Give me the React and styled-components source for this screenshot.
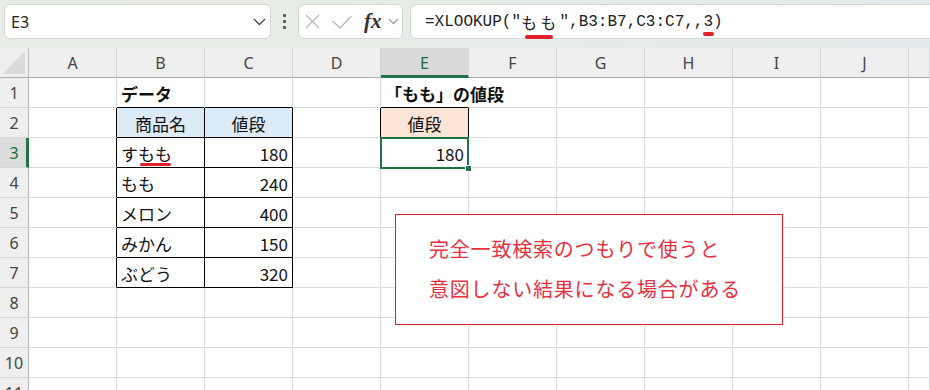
import { Fragment } from "react";
import styled, { createGlobalStyle } from "styled-components";

const GREEN = "#217346";
const GRID = "#dcdcdc";

const GlobalStyle = createGlobalStyle`
  html, body { margin: 0; padding: 0; background: #fff; }
  body { font-family: "Noto Sans CJK JP", "Noto Sans", sans-serif; overflow: hidden; }
`;

const Page = styled.div`
  position: relative;
  width: 930px;
  height: 390px;
  overflow: hidden;
  background: #fff;
`;

/* ---------- formula bar ---------- */
const TopBar = styled.div`
  display: flex;
  align-items: flex-start;
  height: 48px;
  box-sizing: border-box;
  padding: 4px 0 0 4px;
  background: linear-gradient(90deg, #e7ede4 0%, #e6ece7 55%, #e2eaec 100%);
`;

const Box = styled.div`
  display: flex;
  align-items: center;
  box-sizing: border-box;
  height: 35px;
  background: #fff;
  border: 1px solid #d3d8d1;
  border-radius: 6px;
`;

const NameBox = styled(Box)`
  width: 267px;
  justify-content: space-between;
  padding: 0 4px 0 6px;
  font-family: "Noto Sans", sans-serif;
  font-size: 16px;
  color: #222;
`;

const Kebab = styled.div`
  width: 27px;
  height: 35px;
  display: flex;
  flex-direction: column;
  align-items: center;
  justify-content: center;
  gap: 3px;
`;

const Dot = styled.span`
  width: 3px;
  height: 3px;
  border-radius: 1px;
  background: #555;
`;

const FuncBox = styled(Box)`
  width: 105px;
  padding-left: 6px;
  gap: 12px;
`;

const Fx = styled.span`
  font-family: "Liberation Serif", serif;
  font-style: italic;
  font-weight: 700;
  font-size: 21px;
  color: #333;
  margin-right: -6px;
`;

const FormulaBox = styled(Box)`
  flex: 1;
  margin: 0 -12px 0 7px;
  padding-left: 14px;
  font-family: "Liberation Mono", "Noto Sans CJK JP", monospace;
  font-size: 16px;
  color: #222;
  white-space: pre;
`;

const Wide = styled.span`
  letter-spacing: 3.2px;
`;

const Mark = styled.span`
  position: relative;
  &::after {
    content: "";
    position: absolute;
    left: ${(p) => p.$l}px;
    right: ${(p) => p.$r}px;
    bottom: ${(p) => p.$b}px;
    height: ${(p) => p.$h}px;
    border-radius: 2px;
    background: #e3202b;
  }
`;

const Chevron = ({ w = 13, h = 8, color = "#444" }) => (
  <svg width={w} height={h} viewBox={`0 0 ${w} ${h}`}>
    <path d={`M1 1 L${w / 2} ${h - 1.5} L${w - 1} 1`} fill="none" stroke={color} strokeWidth="1.3" />
  </svg>
);

/* ---------- sheet ---------- */
const Sheet = styled.div`
  display: grid;
  grid-template-columns: 29px repeat(10, 88px) 1fr;
  grid-auto-rows: 30px;
`;

const Corner = styled.div`
  background: #efefef;
  border-right: 1px solid #bdbdbd;
  border-bottom: 1px solid #a8a8a8;
  display: flex;
  align-items: flex-end;
  justify-content: flex-end;
  padding: 0 3px 3px 0;
`;

const Triangle = styled.div`
  width: 22px;
  height: 23px;
  background: #dadada;
  clip-path: polygon(100% 0, 100% 100%, 0 100%);
`;

const ColHead = styled.div`
  box-sizing: border-box;
  display: flex;
  align-items: center;
  justify-content: center;
  background: ${(p) => (p.$sel ? "#dadada" : "#efefef")};
  border-right: 1px solid #d6d6d6;
  border-bottom: ${(p) => (p.$sel ? `3px solid ${GREEN}` : "1px solid #a8a8a8")};
  padding-top: ${(p) => (p.$sel ? "2px" : "0")};
  font-family: "Noto Sans", sans-serif;
  font-size: 16px;
  color: ${(p) => (p.$sel ? "#1d6b3d" : "#444")};
`;

const RowHead = styled.div`
  box-sizing: border-box;
  display: flex;
  align-items: center;
  justify-content: center;
  background: ${(p) => (p.$sel ? "#dcdcdc" : "#efefef")};
  border-right: ${(p) => (p.$sel ? `3px solid ${GREEN}` : "1px solid #b8b8b8")};
  border-bottom: 1px solid #d6d6d6;
  padding-left: ${(p) => (p.$sel ? "2px" : "0")};
  font-family: "Noto Sans", sans-serif;
  font-size: 16px;
  color: ${(p) => (p.$sel ? "#1d6b3d" : "#444")};
`;

const Cell = styled.div`
  position: relative;
  box-sizing: border-box;
  display: flex;
  align-items: center;
  justify-content: ${(p) => p.$align || "flex-start"};
  padding: 2px 4px 0;
  background: ${(p) => p.$bg || "#fff"};
  border-right: 1px solid ${(p) => (p.$rb ? "#000" : p.$spill ? "transparent" : GRID)};
  border-bottom: 1px solid ${(p) => (p.$bb ? "#000" : GRID)};
  font-size: 17px;
  font-weight: ${(p) => (p.$bold ? 700 : 400)};
  color: #111;
  white-space: nowrap;
  z-index: ${(p) => (p.$sel ? 2 : p.$spill ? 1 : "auto")};

  ${(p) =>
    p.$sel &&
    `
    &::after {
      content: "";
      position: absolute;
      left: -1px;
      top: -1px;
      right: -1px;
      bottom: -2px;
      border: 2px solid ${GREEN};
    }
    &::before {
      content: "";
      position: absolute;
      right: -4px;
      bottom: -5px;
      width: 5px;
      height: 5px;
      background: ${GREEN};
      border: 1px solid #fff;
      z-index: 1;
    }
  `}
`;

/* ---------- callout ---------- */
const Callout = styled.div`
  position: absolute;
  left: 395px;
  top: 214px;
  width: 388px;
  height: 111px;
  box-sizing: border-box;
  border: 1px solid #e01f2b;
  background: #fff;
  padding: 14px 0 0 33px;
`;

const CalloutLine = styled.div`
  font-size: 20px;
  line-height: 40px;
  letter-spacing: 0.8px;
  color: #e8313f;
  white-space: nowrap;
`;

const COLS = ["A", "B", "C", "D", "E", "F", "G", "H", "I", "J", "K"];
const ROWS = [1, 2, 3, 4, 5, 6, 7, 8, 9, 10, 11];

const BLUE = "#ddebf7";
const PEACH = "#fce4d6";

const fruits = [
  [3, "すもも", 180],
  [4, "もも", 240],
  [5, "メロン", 400],
  [6, "みかん", 150],
  [7, "ぶどう", 320],
];

const cells = {
  B1: { text: "データ", bold: true, bb: true },
  C1: { bb: true },
  E1: { text: "「もも」の値段", bold: true, bb: true, spill: true },
  B2: { text: "商品名", align: "center", bg: BLUE, rb: true, bb: true },
  C2: { text: "値段", align: "center", bg: BLUE, rb: true, bb: true },
  D2: { rb: true },
  E2: { text: "値段", align: "center", bg: PEACH, rb: true, bb: true },
  E3: { text: "180", align: "flex-end", sel: true },
};

fruits.forEach(([r, name, price]) => {
  cells[`A${r}`] = { rb: true };
  cells[`B${r}`] = { text: name, rb: true, bb: true };
  cells[`C${r}`] = { text: String(price), align: "flex-end", rb: true, bb: true };
});
cells.A2 = { rb: true };
cells.B3.text = (
  <>
    す
    <Mark $l={2} $r={1} $b={0} $h={3}>
      もも
    </Mark>
  </>
);

export default function App() {
  return (
    <Page>
      <GlobalStyle />
      <TopBar>
        <NameBox>
          <span>E3</span>
          <Chevron />
        </NameBox>
        <Kebab>
          <Dot />
          <Dot />
          <Dot />
        </Kebab>
        <FuncBox>
          <svg width="15" height="15" viewBox="0 0 15 15">
            <path d="M1 1 L14 14 M14 1 L1 14" stroke="#b8b8b8" strokeWidth="1.3" fill="none" />
          </svg>
          <svg width="20" height="14" viewBox="0 0 20 14">
            <path d="M0.5 6 L8 13 L19.5 1" stroke="#b8b8b8" strokeWidth="1.3" fill="none" />
          </svg>
          <Fx>fx</Fx>
          <Chevron w={11} h={7} color="#9a9a9a" />
        </FuncBox>
        <FormulaBox>
          =XLOOKUP("
          <Mark $l={4} $r={6} $b={-5} $h={4}>
            <Wide>もも</Wide>
          </Mark>
          ",B3:B7,C3:C7,,
          <Mark $l={0} $r={-1} $b={-5} $h={4}>
            3
          </Mark>
          )
        </FormulaBox>
      </TopBar>

      <Sheet>
        <Corner>
          <Triangle />
        </Corner>
        {COLS.map((c) => (
          <ColHead key={c} $sel={c === "E"}>
            {c === "K" ? "" : c}
          </ColHead>
        ))}
        {ROWS.map((r) => (
          <Fragment key={r}>
            <RowHead $sel={r === 3}>{r}</RowHead>
            {COLS.map((c) => {
              const d = cells[`${c}${r}`] || {};
              return (
                <Cell
                  key={c}
                  $align={d.align}
                  $bold={d.bold}
                  $bg={d.bg}
                  $rb={d.rb}
                  $bb={d.bb}
                  $sel={d.sel}
                  $spill={d.spill}
                >
                  {d.text}
                </Cell>
              );
            })}
          </Fragment>
        ))}
      </Sheet>

      <Callout>
        <CalloutLine>完全一致検索のつもりで使うと</CalloutLine>
        <CalloutLine>意図しない結果になる場合がある</CalloutLine>
      </Callout>
    </Page>
  );
}
